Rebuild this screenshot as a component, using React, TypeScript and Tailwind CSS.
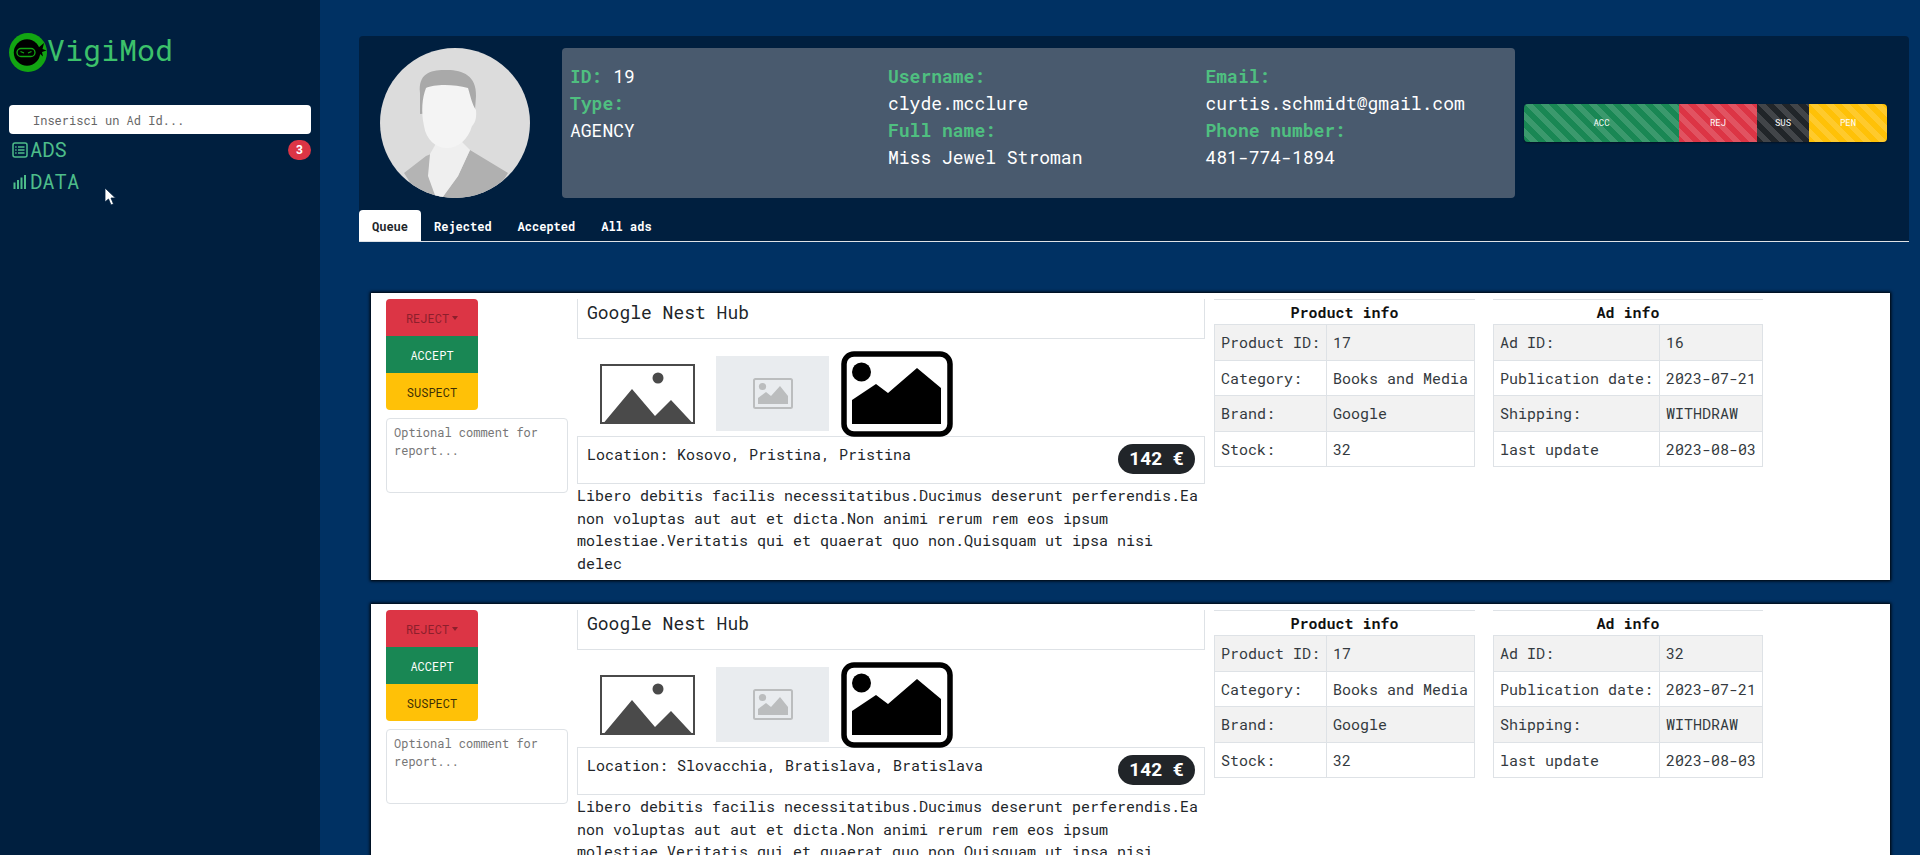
const mono = "font-['Roboto_Mono','Liberation_Mono',monospace]";

function Logo() {
  return (
    <svg width="38" height="39" viewBox="0 0 38 39" className="shrink-0">
      <ellipse cx="19" cy="19.5" rx="19" ry="19.5" fill="#12a512" />
      <circle cx="18" cy="19.5" r="13.2" fill="#000" />
      <path d="M29 15l6-5-1.5 6 4 1.5-4.5 1.5 1 4.5-6-5z" fill="#000" />
      <rect x="8" y="15.5" width="18" height="8" rx="4" fill="#000" stroke="#12a512" strokeWidth="1.3" />
      <path d="M11.5 18.5l3.5 1.5M22.5 18.5l-3.5 1.5" stroke="#12a512" strokeWidth="1.3" />
    </svg>
  );
}

function ListIcon() {
  return (
    <svg width="16" height="16" viewBox="0 0 16 16" fill="none" stroke="#4dbd8a" className="shrink-0">
      <rect x="1" y="1" width="14" height="14" rx="2" strokeWidth="1.5" />
      <path d="M6 5h6.5M6 8h6.5M6 11h6.5" strokeWidth="1.4" />
      <path d="M3.2 5h1.4M3.2 8h1.4M3.2 11h1.4" strokeWidth="1.4" />
    </svg>
  );
}

function BarsIcon() {
  return (
    <svg width="14" height="14" viewBox="0 0 14 14" fill="#4dbd8a" className="shrink-0">
      <rect x="0.5" y="7.5" width="2" height="6.5" />
      <rect x="4" y="5" width="2" height="9" />
      <rect x="7.5" y="2.5" width="2" height="11.5" />
      <rect x="11" y="0" width="2" height="14" />
    </svg>
  );
}

function Avatar() {
  return (
    <div className="w-[150px] h-[150px] rounded-full overflow-hidden shrink-0">
      <svg width="150" height="150" viewBox="0 0 150 150">
        <rect width="150" height="150" fill="#dcdcdc" />
        <path d="M24 125 L46 108 L56 104 L54 130 L62 150 L40 150Z" fill="#b4b4b4" />
        <path d="M90 102 L128 125 L112 150 L62 150 L78 128Z" fill="#b0b0b0" />
        <path d="M50 106 L58 92 H80 L90 102 L78 128 L62 150 H56 L48 128 Z" fill="#efefef" />
        <path d="M40 45 C38 26 50 22 64 22 C80 21 97 26 96 48 L95 62 L40 66Z" fill="#a9a9a9" />
        <path d="M46 40 C54 36 74 36 88 40 C91 50 92 56 96 62 C97 72 94 76 92 78 C88 92 78 100 67 100 C56 100 46 92 44 78 C41 64 42 50 46 40Z" fill="#f4f4f4" />
      </svg>
    </div>
  );
}

function Stripe({ w, c, t, tc }: { w: string; c: string; t: string; tc: string }) {
  return (
    <div
      className={`${w} ${c} ${tc} flex items-center justify-center h-full text-[9px] bg-[linear-gradient(45deg,rgba(255,255,255,0.15)_25%,transparent_25%,transparent_50%,rgba(255,255,255,0.15)_50%,rgba(255,255,255,0.15)_75%,transparent_75%,transparent)] bg-size-[16px_16px]`}
    >
      {t}
    </div>
  );
}

function Lbl({ children }: { children: React.ReactNode }) {
  return <span className="font-bold text-[#4fbf80]">{children}</span>;
}

function Placeholder1() {
  return (
    <svg width="95" height="60" viewBox="0 0 95 60" className="shrink-0">
      <rect x="1" y="1" width="93" height="58" fill="#fff" stroke="#4a4a4a" strokeWidth="2" />
      <ellipse cx="58" cy="14" rx="5.5" ry="5.5" fill="#4a4a4a" />
      <path d="M4 58.5 L32 25 L55 52 L71 36 L92 58.5 Z" fill="#4a4a4a" />
    </svg>
  );
}

function Placeholder2() {
  return (
    <div className="w-[113px] h-[75px] bg-[#e9ecef] flex items-center justify-center shrink-0">
      <svg width="40" height="31" viewBox="0 0 40 31">
        <rect x="1" y="1" width="38" height="29" rx="1.5" fill="none" stroke="#bbbdbe" strokeWidth="2" />
        <circle cx="9.5" cy="8.5" r="3.6" fill="#bbbdbe" />
        <path d="M5 26 V20 L13 14 L18 18 L27 8 L35 18 V26 Z" fill="#bbbdbe" />
      </svg>
    </div>
  );
}

function Placeholder3() {
  return (
    <svg width="112" height="86" viewBox="0 0 112 86" className="shrink-0">
      <rect x="3" y="3" width="106" height="80" rx="10" fill="#fff" stroke="#000" strokeWidth="5.5" />
      <ellipse cx="20.5" cy="21" rx="9.5" ry="9.5" fill="#000" />
      <path d="M11 73 V49 L35 33 L47 42 L76 17 L100 37 V73 Z" fill="#000" />
    </svg>
  );
}

function InfoTable({ title, rows, w1, w2 }: { title: string; rows: string[][]; w1: string; w2: string }) {
  return (
    <div className="shrink-0">
      <div className="border-t border-[#dee2e6] text-center font-bold text-[15px] leading-[24px] h-[25px] text-[#111]">{title}</div>
      <div className="border-t border-l border-[#dee2e6] text-[#343a40] text-[15px] leading-5">
        {rows.map((r, i) => (
          <div key={r[0]} className={`flex border-b border-r border-[#dee2e6] h-[35.6px] items-center ${i % 2 === 0 ? "bg-[#f2f2f2]" : "bg-white"}`}>
            <div className={`${w1} pl-[6px] h-full flex items-center border-r border-[#dee2e6] whitespace-pre`}>{r[0]}</div>
            <div className={`${w2} pl-[6px] whitespace-pre`}>{r[1]}</div>
          </div>
        ))}
      </div>
    </div>
  );
}

function AdCard({ location, adId }: { location: string; adId: string }) {
  return (
    <div className="bg-white h-[287px] shrink-0 flex shadow-[0_0_3px_1px_#000] pt-1.5 overflow-hidden">
      <div className="w-[206px] pl-[15px] shrink-0 flex flex-col">
        <div className="w-[92px] rounded overflow-hidden text-[12px] text-center">
          <div className="h-[37px] bg-[#dc3545] text-[#8c1f2c] flex items-center justify-center gap-[3px]">
            REJECT
            <span className="border-x-[3.5px] border-t-4 border-x-transparent border-t-[#8c1f2c]" />
          </div>
          <div className="h-[37px] bg-[#198754] text-white flex items-center justify-center">ACCEPT</div>
          <div className="h-[37px] bg-[#ffc107] text-[#3d2f05] flex items-center justify-center">SUSPECT</div>
        </div>
        <div className="mt-2 w-[182px] h-[75px] border border-[#dee2e6] rounded pl-[7px] pr-2 py-1 text-[12px] leading-[18px] text-[#777]">
          Optional comment for report...
        </div>
      </div>
      <div className="w-[628px] shrink-0">
        <div className="h-[40px] border-x border-b border-[#dee2e6] flex items-center pl-[9px] pb-[12px] text-[18px] text-[#212529]">Google Nest Hub</div>
        <div className="h-[97px] flex items-center pt-[12px] pl-[23px] gap-[21px]">
          <Placeholder1 />
          <Placeholder2 />
          <div className="-ml-[9px]"><Placeholder3 /></div>
        </div>
        <div className="h-[48px] border border-[#dee2e6] pl-[9px] pr-[9px] pt-[7px] flex justify-between text-[15px] leading-5 text-[#212529]">
          <span>{location}</span>
          <span className="bg-[#212529] text-white rounded-full font-bold text-[19px] [word-spacing:6px] w-[77px] h-[30px] flex items-center justify-center font-['Roboto',sans-serif]">142 €</span>
        </div>
        <p className="text-[15px] leading-[22.5px] text-[#212529] w-[625px]">
          Libero debitis facilis necessitatibus.Ducimus deserunt perferendis.Ea non voluptas aut aut et dicta.Non animi rerum rem eos ipsum molestiae.Veritatis qui et quaerat quo non.Quisquam ut ipsa nisi delec
        </p>
      </div>
      <div className="flex ml-[9px] gap-[18px]">
        <InfoTable
          title="Product info"
          w1="w-[112px]"
          w2="w-[147px]"
          rows={[["Product ID:", "17"], ["Category:", "Books and Media"], ["Brand:", "Google"], ["Stock:", "32"]]}
        />
        <InfoTable
          title="Ad info"
          w1="w-[166px]"
          w2="w-[102px]"
          rows={[["Ad ID:", adId], ["Publication date:", "2023-07-21"], ["Shipping:", "WITHDRAW"], ["last update", "2023-08-03"]]}
        />
      </div>
    </div>
  );
}

export default function App() {
  return (
    <div className={`flex w-[1920px] h-[855px] overflow-hidden bg-[#003163] ${mono}`}>
      <aside className="w-[320px] shrink-0 bg-[#001f3f] pl-[9px] pr-[9px] relative">
        <div className="flex items-center h-[39px] mt-[33px]">
          <Logo />
          <span className="text-[30px] text-[#3cc16b] -mt-[6px]">VigiMod</span>
        </div>
        <div className="mt-[33px] h-[29px] bg-white rounded flex items-center pl-[24px] text-[12px] text-[#666]">Inserisci un Ad Id...</div>
        <div className="flex items-center mt-[3px] h-[26px] pl-[3px] text-[#4dbd8a] text-[20.5px]">
          <ListIcon />
          <span className="ml-[2px]">ADS</span>
          <span className="ml-auto bg-[#dc3545] text-white font-bold rounded-full w-[23px] h-[20px] flex items-center justify-center text-[12px] font-['Roboto',sans-serif]">3</span>
        </div>
        <div className="flex items-center mt-[6px] h-[26px] pl-[4px] text-[#4dbd8a] text-[20.5px]">
          <BarsIcon />
          <span className="ml-[3px]">DATA</span>
        </div>
        <svg width="14" height="20" viewBox="0 0 14 20" className="absolute left-[104px] top-[187px]">
          <path d="M1 1 L1 15 L4.5 12 L7 18 L9.5 17 L7 11 L11.5 11 Z" fill="#fff" stroke="#001f3f" strokeWidth="0.8" />
        </svg>
      </aside>
      <main className="flex-1 min-w-0 pl-[39px] pr-[11px] pt-9">
        <section className="bg-[#001f3f] rounded-t h-[206px]">
          <div className="flex items-center h-[174px] pl-[21px]">
            <Avatar />
            <div className="ml-8 w-[953px] h-[150px] bg-[#495a6e] rounded flex pl-2 pt-[15px] text-white text-[18px] leading-[27px]">
              <div className="w-[318px]">
                <div><Lbl>ID:</Lbl> 19</div>
                <div><Lbl>Type:</Lbl></div>
                <div>AGENCY</div>
              </div>
              <div className="w-[317.5px]">
                <div><Lbl>Username:</Lbl></div>
                <div>clyde.mcclure</div>
                <div><Lbl>Full name:</Lbl></div>
                <div>Miss Jewel Stroman</div>
              </div>
              <div>
                <div><Lbl>Email:</Lbl></div>
                <div>curtis.schmidt@gmail.com</div>
                <div><Lbl>Phone number:</Lbl></div>
                <div>481-774-1894</div>
              </div>
            </div>
            <div className="ml-[9px] w-[363px] h-[38px] rounded overflow-hidden flex shadow-[0_1px_2px_rgba(0,0,0,0.4)]">
              <Stripe w="w-[155px]" c="bg-[#198754]" t="ACC" tc="text-white" />
              <Stripe w="w-[78px]" c="bg-[#dc3545]" t="REJ" tc="text-white" />
              <Stripe w="w-[52px]" c="bg-[#212529]" t="SUS" tc="text-white" />
              <Stripe w="w-[78px]" c="bg-[#ffc107]" t="PEN" tc="text-white" />
            </div>
          </div>
          <div className="flex h-[32px] border-b border-[#dee2e6] text-[12px] font-bold text-white">
            <div className="w-[62px] bg-white text-[#212529] rounded-t flex items-center justify-center">Queue</div>
            <div className="ml-[13px] flex items-center">Rejected</div>
            <div className="ml-[26px] flex items-center">Accepted</div>
            <div className="ml-[26px] flex items-center">All ads</div>
          </div>
        </section>
        <div className="mt-[51px] ml-[12px] mr-[19px] flex flex-col gap-[24px]">
          <AdCard location="Location: Kosovo, Pristina, Pristina" adId="16" />
          <AdCard location="Location: Slovacchia, Bratislava, Bratislava" adId="32" />
        </div>
      </main>
    </div>
  );
}
